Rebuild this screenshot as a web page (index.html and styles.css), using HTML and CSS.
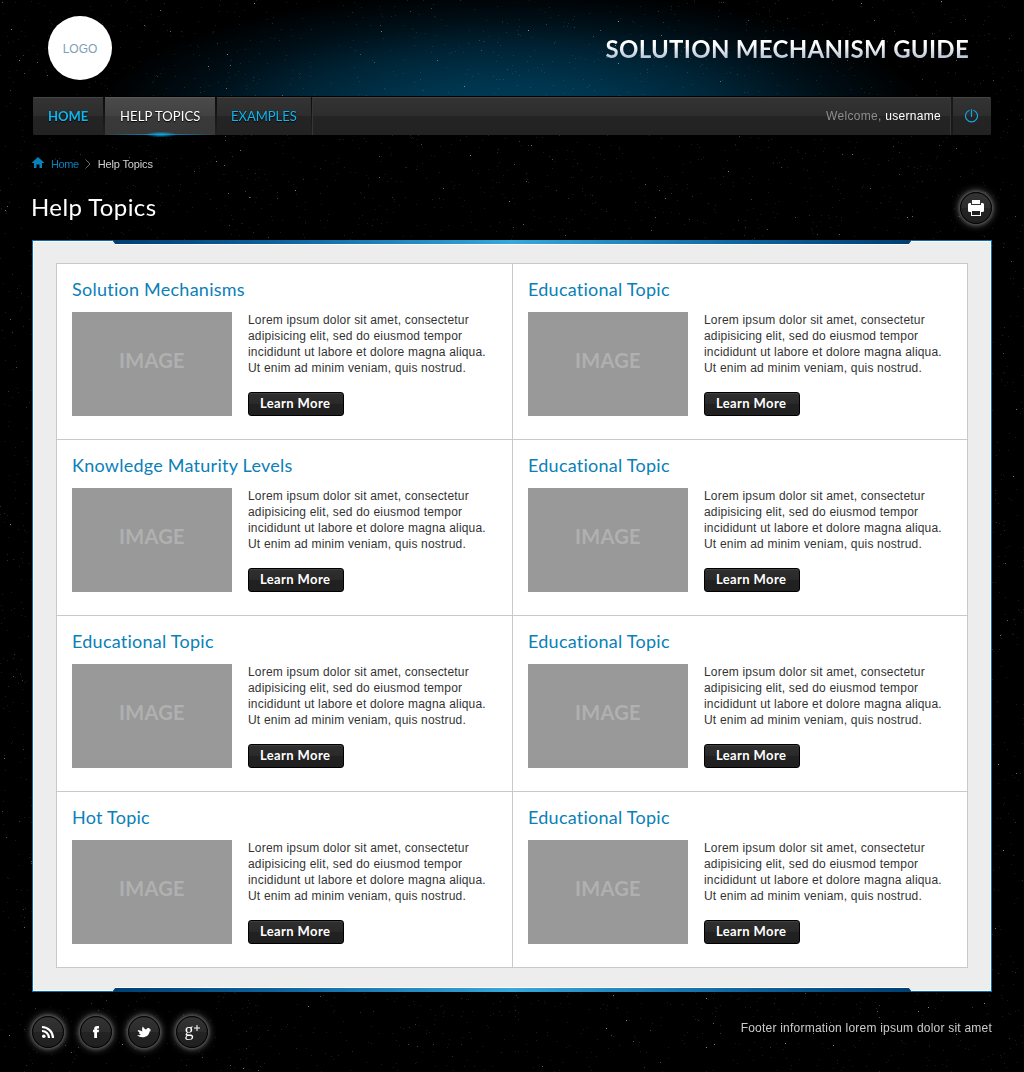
FILE: index.html
```html
<!DOCTYPE html>
<html lang="en">
<head>
<meta charset="utf-8">
<title>Help Topics - Solution Mechanism Guide</title>
<link rel="stylesheet" href="styles.css">
</head>
<body>
<canvas class="stars" width="1024" height="1072"></canvas>
<div class="page">
  <header class="header">
    <div class="logo">LOGO</div>
    <div class="site-title">SOLUTION MECHANISM GUIDE</div>
  </header>
  <nav class="nav">
    <a class="nav-item home">HOME</a>
    <a class="nav-item active">HELP TOPICS</a>
    <a class="nav-item examples">EXAMPLES</a>
    <div class="welcome">Welcome, <b>username</b></div>
    <a class="power" aria-label="Log out">
      <svg width="14" height="14" viewBox="0 0 14 14" fill="none" stroke="#13a7e0" stroke-width="1.2"><path d="M4.500 1.200A6 6 0 1 0 8.500 1.200M6.500 .3V8"/></svg>
    </a>
  </nav>
  <div class="crumbs">
    <svg width="12" height="11" viewBox="0 0 12 11"><path fill="#0981bd" d="M6 0 12 5.600V6H10V11H7.500V7.500H4.500V11H2V6H0V5.600Z"/></svg>
    <a class="crumb-home">Home</a>
    <svg class="chev" width="6" height="10" viewBox="0 0 6 10" fill="none" stroke="#6b6b6b"><path d="M.5 .5 5 5 .5 9.500"/></svg>
    <span class="crumb-here">Help Topics</span>
  </div>
  <div class="heading">
    <h1>Help Topics</h1>
    <a class="round" aria-label="Print">
      <svg width="16" height="16" viewBox="0 0 16 16"><path fill="#fff" fill-rule="evenodd" d="M4 0H12V4H4ZM0 4.500Q0 3 1.500 3H3V5H13V3H14.500Q16 3 16 4.500V10.500Q16 12 14.500 12H13V16H3V12H1.500Q0 12 0 10.500ZM4 11V15H12V11Z"/></svg>
    </a>
  </div>
  <main class="panel">
    <div class="bar top"></div>
    <div class="grid"></div>
    <div class="bar bottom"></div>
  </main>
  <footer class="footer">
    <div class="social">
      <a class="round" aria-label="RSS"><svg width="14" height="14" viewBox="0 0 14 14" fill="none" stroke="#fff" stroke-width="2.200"><circle cx="2.800" cy="11.200" r="1.800" fill="#fff" stroke="none"/><path d="M1 6A7 7 0 0 1 8 13M1 2A11 11 0 0 1 12 13"/></svg></a>
      <a class="round" aria-label="Facebook"><svg width="14" height="14" viewBox="0 0 14 14" fill="#fff"><path d="M5.200 13V7.200H4V4.800H5.200V4C5.200 1.800 6.200 1 8 1H10V3.400H8.800Q8 3.400 8 4.200V4.800H10L9.700 7.200H8V13Z"/></svg></a>
      <a class="round" aria-label="Twitter"><svg width="14" height="12" viewBox="0 0 14 12" fill="#fff"><path d="M14 5 12.500 5.400C12.300 8.800 9.500 11.200 5.500 11.200 3.300 11.200 1.500 10.600 0 9.300 1.600 9.500 3 9.200 3.900 8.500 2.800 8.300 2.200 7.700 2 7L2.900 6.900C1.600 6.300 .9 5.200 .8 4 2.500 4.200 4 4.600 5.400 5.400 4.800 3.700 5 2.100 5.800 .4 6.800 2 8 2.900 9.100 3.600 9.600 2.600 10.400 2 11.300 2 12.200 2 12.700 2.500 12.900 3.300L14 3.800 13.100 4.500Z"/></svg></a>
      <a class="round gplus" aria-label="Google Plus"><span>g</span><svg width="6" height="6" viewBox="0 0 6 6" stroke="#fff"><path d="M3 0V6M0 3H6"/></svg></a>
    </div>
    <div class="foot-text">Footer information lorem ipsum dolor sit amet</div>
  </footer>
</div>
<script src="script.js"></script>
</body>
</html>
```
FILE: styles.css
```css
* { box-sizing: border-box; }
body { margin: 0; width: 1024px; height: 1072px; overflow: hidden; background: #000; font-family: "Liberation Sans", Arial, sans-serif; font-variant-ligatures: none; position: relative; }
.stars { position: absolute; left: 0; top: 0; }
.page { position: relative; padding: 0 32px; height: 1072px; }
.header { height: 96px; display: flex; justify-content: space-between; align-items: flex-start; padding: 16px 23px 0 16px; }
.header::before { content: ""; position: absolute; left: 0; right: 0; top: 0; height: 96px; background: radial-gradient(ellipse 420px 132px at 512px 122px, #003c58 0%, #00354e 30%, #002436 55%, #000e16 78%, #000 100%); mix-blend-mode: screen; }
.logo { width: 64px; height: 64px; border-radius: 50%; background: #fff; color: #7f9fb3; font-size: 12px; line-height: 66px; text-align: center; position: relative; }
.site-title { font: 700 24px/30px Lato, sans-serif; margin-top: 18px; background: linear-gradient(#fff 35%, #b7c5d6 80%); -webkit-background-clip: text; background-clip: text; color: transparent; white-space: nowrap; letter-spacing: .29px; position: relative; }
.nav { height: 39px; border: 1px solid #000; display: flex; background: linear-gradient(#333 0, #2d2d2d 19px, #242424 19px, #222 100%); box-shadow: inset 0 1px #444; border-bottom: 0; position: relative; border-radius: 2px; font: 13px/38px Lato, sans-serif; }
.nav-item { color: #0db7f0; padding-left: 15px; border-right: 2px solid; border-image: linear-gradient(#0a0a0a, #222) 1; text-shadow: 0 1px 1px #000; white-space: nowrap; position: relative; }
.home { width: 72px; font-weight: 700; }
.active { width: 112px; color: #fff; background: linear-gradient(#4b4b4b, #414141 19px, #393939 19px, #383838); box-shadow: inset 0 1px #5a5a5a; letter-spacing: .1px; }
.active::after { content: ""; position: absolute; left: 0; right: 0; bottom: -2px; height: 5px; background: radial-gradient(ellipse 16px 3px at 56px 2.5px, #10a9e8, transparent), linear-gradient(90deg, transparent, #0884bb 40%, #0884bb 60%, transparent) 0 2px / 100% 1px no-repeat; }
.examples { width: 95px; padding-left: 14px; border-right-width: 1px; box-shadow: 1px 0 #363636; }
.welcome { margin-left: auto; padding-right: 10px; font: 12px/38px "Liberation Sans", Arial, sans-serif; color: #8d8d8d; letter-spacing: .3px; }
.welcome b { font-weight: 400; color: #fff; }
.power { width: 40px; display: flex; align-items: center; justify-content: center; border-left: 2px solid #181818; box-shadow: -1px 0 #363636; }
.crumbs { display: flex; align-items: center; height: 16px; margin-top: 21px; font-size: 11px; color: #d0d0d0; letter-spacing: -.15px; }
.crumb-home { color: #0981bd; margin: 0 6px 0 7px; letter-spacing: -.4px; }
.chev { margin: 0 7px 0 0; }
.crumbs > svg:first-child { position: relative; top: -2px; }
.heading { display: flex; align-items: flex-start; justify-content: space-between; height: 68px; padding-top: 20px; }
h1 { margin: -1px 0 0 -1px; font: 400 24px/32px Lato, sans-serif; letter-spacing: .4px; color: #fff; }
.round { width: 32px; height: 32px; border-radius: 50%; display: flex; align-items: center; justify-content: center; background: linear-gradient(#333, #2c2c2c 50%, #232323 50%, #202020); border: 1px solid #080808; box-shadow: 0 0 3px 1px #555, 0 0 7px 2px rgba(150,150,150,.5); color: #fff; }
.panel { border: 1px solid #0a6fa8; background: #ededed; height: 752px; padding: 22px 23px; box-shadow: inset 0 0 0 1px #fff; position: relative; }
.bar { position: absolute; left: 79px; width: 800px; height: 5px; --blue: linear-gradient(90deg, #003e72, #0d629c 20%, #35a8dc 50%, #0d629c 80%, #003e72); }
.top { top: -1px; background: var(--blue) 0 0 / 100% 4px no-repeat, #fff; clip-path: polygon(0 0, 100% 0, calc(100% - 4px) 100%, 4px 100%); }
.bottom { bottom: -1px; background: var(--blue) 0 1px / 100% 4px no-repeat, #fff; clip-path: polygon(4px 0, calc(100% - 4px) 0, 100% 100%, 0 100%); }
.grid { display: grid; grid-template-columns: 456px 455px; border: solid #c9c9c9; border-width: 1px 0 0 1px; background: #fff; width: 912px; }
.card { height: 176px; padding: 14px 0 0 15px; border: solid #c9c9c9; border-width: 0 1px 1px 0; }
.card h2 { margin: 0 0 12px; font: 400 18px/22px Lato, sans-serif; letter-spacing: .25px; color: #0a80b8; }
.card-body { display: flex; gap: 16px; }
.thumb { width: 160px; height: 104px; background: #999; color: #b0b0b0; font: 700 20px/96px Lato, sans-serif; letter-spacing: .3px; text-align: center; flex: none; }
.card p { margin: 0 0 16px; font-size: 12px; line-height: 16px; letter-spacing: .19px; color: #333; white-space: nowrap; }
.btn { display: block; width: 96px; height: 24px; border: 1px solid #000; border-radius: 3px; background: linear-gradient(#303030, #292929 50%, #212121 50%, #202020); box-shadow: inset 0 1px #3f3f3f; color: #fff; font: 700 13px/21px Lato, sans-serif; letter-spacing: .38px; padding-left: 11px; }
.footer { display: flex; justify-content: space-between; padding-top: 24px; }
.social { display: flex; gap: 16px; }
.gplus { font: 18px/20px "Liberation Serif", serif; padding-bottom: 5px; }
.gplus svg { margin-bottom: 4px; }
.foot-text { font-size: 12px; line-height: 24px; letter-spacing: .22px; color: #ccc; }
```
FILE: script.js
```js
const titles = ["Solution Mechanisms", "Educational Topic", "Knowledge Maturity Levels", "Educational Topic",
  "Educational Topic", "Educational Topic", "Hot Topic", "Educational Topic"];
document.querySelector(".grid").innerHTML = titles.map(t => `
  <section class="card"><h2>${t}</h2><div class="card-body"><div class="thumb">IMAGE</div><div>
  <p>Lorem ipsum dolor sit amet, consectetur<br>adipisicing elit, sed do eiusmod tempor<br>incididunt ut labore et dolore magna aliqua.<br>Ut enim ad minim veniam, quis nostrud.</p>
  <a class="btn">Learn More</a></div></div></section>`).join("");

// Star field, seeded so that it is the same on every load.
const ctx = document.querySelector(".stars").getContext("2d");
let seed = 77;
const rnd = () => (seed = (seed * 16807) % 2147483647) / 2147483647;
for (let i = 0; i < 7500; i++) {
  const b = 0.1 + 0.45 * Math.pow(rnd(), 16);
  ctx.fillStyle = `rgba(255,255,255,${b})`;
  ctx.fillRect(Math.floor(rnd() * 1024), Math.floor(rnd() * 1072), 1, 1);
}
```
